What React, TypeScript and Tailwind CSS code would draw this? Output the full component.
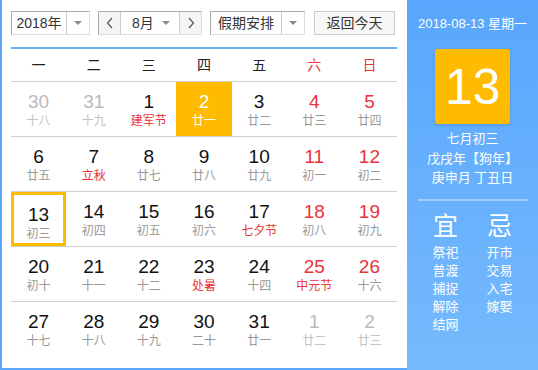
import React from "react";

interface Day {
  n: number;
  lunar: string;
  other?: boolean;
  fest?: boolean;
}

const weeks: Day[][] = [
  [
    { n: 30, lunar: "十八", other: true },
    { n: 31, lunar: "十九", other: true },
    { n: 1, lunar: "建军节", fest: true },
    { n: 2, lunar: "廿一" },
    { n: 3, lunar: "廿二" },
    { n: 4, lunar: "廿三" },
    { n: 5, lunar: "廿四" },
  ],
  [
    { n: 6, lunar: "廿五" },
    { n: 7, lunar: "立秋", fest: true },
    { n: 8, lunar: "廿七" },
    { n: 9, lunar: "廿八" },
    { n: 10, lunar: "廿九" },
    { n: 11, lunar: "初一" },
    { n: 12, lunar: "初二" },
  ],
  [
    { n: 13, lunar: "初三" },
    { n: 14, lunar: "初四" },
    { n: 15, lunar: "初五" },
    { n: 16, lunar: "初六" },
    { n: 17, lunar: "七夕节", fest: true },
    { n: 18, lunar: "初八" },
    { n: 19, lunar: "初九" },
  ],
  [
    { n: 20, lunar: "初十" },
    { n: 21, lunar: "十一" },
    { n: 22, lunar: "十二" },
    { n: 23, lunar: "处暑", fest: true },
    { n: 24, lunar: "十四" },
    { n: 25, lunar: "中元节", fest: true },
    { n: 26, lunar: "十六" },
  ],
  [
    { n: 27, lunar: "十七" },
    { n: 28, lunar: "十八" },
    { n: 29, lunar: "十九" },
    { n: 30, lunar: "二十" },
    { n: 31, lunar: "廿一" },
    { n: 1, lunar: "廿二", other: true },
    { n: 2, lunar: "廿三", other: true },
  ],
];

const weekdays = ["一", "二", "三", "四", "五", "六", "日"];

function Caret() {
  return (
    <svg width="10" height="6" viewBox="0 0 10 6">
      <path d="M1 1h8L5 5z" fill="#8a8a8a" />
    </svg>
  );
}

function Chevron({ dir }: { dir: "l" | "r" }) {
  return (
    <svg width="8" height="12" viewBox="0 0 8 12">
      <path
        d={dir === "l" ? "M6 1L1.5 6L6 11" : "M2 1l4.5 5L2 11"}
        fill="none"
        stroke="#555"
        strokeWidth="1.2"
      />
    </svg>
  );
}

function DayCell({ d, col, today, selected }: { d: Day; col: number; today: boolean; selected: boolean }) {
  const weekend = col >= 5;
  let numColor = "text-[#111]";
  if (d.other) numColor = "text-[#bbbbbb]";
  else if (weekend) numColor = "text-[#e8333a]";
  let lunarColor = "text-[#999]";
  if (d.other) lunarColor = "text-[#c4c4c4]";
  else if (d.fest) lunarColor = "text-[#e8333a]";
  if (today) {
    numColor = "text-white";
    lunarColor = "text-white";
  }
  return (
    <div
      className={`flex flex-col items-center pt-[9px] h-[54px] ${today ? "bg-[#ffbb00]" : ""} ${
        selected ? "border-[3px] border-[#ffbb00] pt-[6px]" : ""
      }`}
    >
      <span className={`text-[19px] leading-[22px] ${numColor}`}>{d.n}</span>
      <span className={`text-[12px] leading-[17px] ${lunarColor}`}>{d.lunar}</span>
    </div>
  );
}

export default function App() {
  return (
    <div
      className="flex w-[538px] h-[370px] bg-white"
      style={{ fontFamily: '"Liberation Sans", "Noto Sans CJK SC", sans-serif' }}
    >
      <div className="w-[407px] h-full border-l-2 border-b-2 border-[#5aa6fb] pl-[9px] pr-[10px] pt-[11px]">
        <div className="flex items-center h-[24px] text-[14px] text-[#333]">
          <div className="flex h-full w-[79px] border border-[#aaa] border-r-[#ddd] border-b-[#ddd] bg-white">
            <span className="w-[55px] flex items-center justify-center border-r border-[#ccc]">2018年</span>
            <span className="flex-1 flex items-center justify-center">
              <Caret />
            </span>
          </div>
          <div className="flex h-full w-[104px] ml-[8px] border border-[#aaa] border-r-[#ddd] border-b-[#ddd] bg-white">
            <span className="w-[22px] flex items-center justify-center bg-[#f5f5f5] border-r border-[#ccc]">
              <Chevron dir="l" />
            </span>
            <span className="flex-1 flex items-center justify-between pl-[11px] pr-[8px]">
              <span>8月</span>
              <Caret />
            </span>
            <span className="w-[22px] flex items-center justify-center bg-[#f5f5f5] border-l border-[#ccc]">
              <Chevron dir="r" />
            </span>
          </div>
          <div className="flex h-full w-[95px] ml-[8px] border border-[#aaa] border-r-[#ddd] border-b-[#ddd] bg-white">
            <span className="w-[71px] flex items-center justify-center border-r border-[#ccc]">假期安排</span>
            <span className="flex-1 flex items-center justify-center">
              <Caret />
            </span>
          </div>
          <div className="flex h-full w-[81px] ml-[9px] items-center justify-center border border-[#ccc] bg-[#f7f7f7]">
            返回今天
          </div>
        </div>
        <div className="mt-[12px] h-[2px] bg-[#6aaff7]" />
        <div className="grid grid-cols-7 h-[33px] items-center text-[14px] border-b border-[#d0d0d0]">
          {weekdays.map((w, i) => (
            <span key={w} className={`text-center ${i >= 5 ? "text-[#e8333a]" : "text-[#222]"}`}>
              {w}
            </span>
          ))}
        </div>
        {weeks.map((row, ri) => (
          <div key={ri} className={`grid grid-cols-7 ${ri < 4 ? "border-b border-[#d0d0d0]" : ""}`}>
            {row.map((d, ci) => (
              <DayCell key={ci} d={d} col={ci} today={ri === 0 && ci === 3} selected={ri === 2 && ci === 0} />
            ))}
          </div>
        ))}
      </div>
      <div className="flex-1 h-full flex flex-col items-center text-white bg-gradient-to-b from-[#58a6fd] to-[#76bafd]">
        <div className="mt-[15px] text-[13px] leading-[18px]">2018-08-13 星期一</div>
        <div className="mt-[16px] w-[75px] h-[75px] rounded-[3px] bg-[#ffbb00] flex items-center justify-center text-[50px] leading-none shadow-[0_1px_3px_rgba(0,0,0,0.15)]">
          13
        </div>
        <div className="mt-[5px] flex flex-col items-center text-[13px] leading-[19.5px]">
          <span>七月初三</span>
          <span>戊戌年【狗年】</span>
          <span>庚申月 丁丑日</span>
        </div>
        <div className="mt-[11px] w-[110px] h-[2px] bg-[#9fcdfd]" />
        <div className="mt-[10px] flex gap-[28px]">
          <div className="flex flex-col items-center">
            <span className="text-[25px] leading-[30px]">宜</span>
            <div className="mt-[3px] flex flex-col text-[13px] leading-[18px]">
              <span>祭祀</span>
              <span>普渡</span>
              <span>捕捉</span>
              <span>解除</span>
              <span>结网</span>
            </div>
          </div>
          <div className="flex flex-col items-center">
            <span className="text-[25px] leading-[30px]">忌</span>
            <div className="mt-[3px] flex flex-col text-[13px] leading-[18px]">
              <span>开市</span>
              <span>交易</span>
              <span>入宅</span>
              <span>嫁娶</span>
            </div>
          </div>
        </div>
      </div>
    </div>
  );
}
